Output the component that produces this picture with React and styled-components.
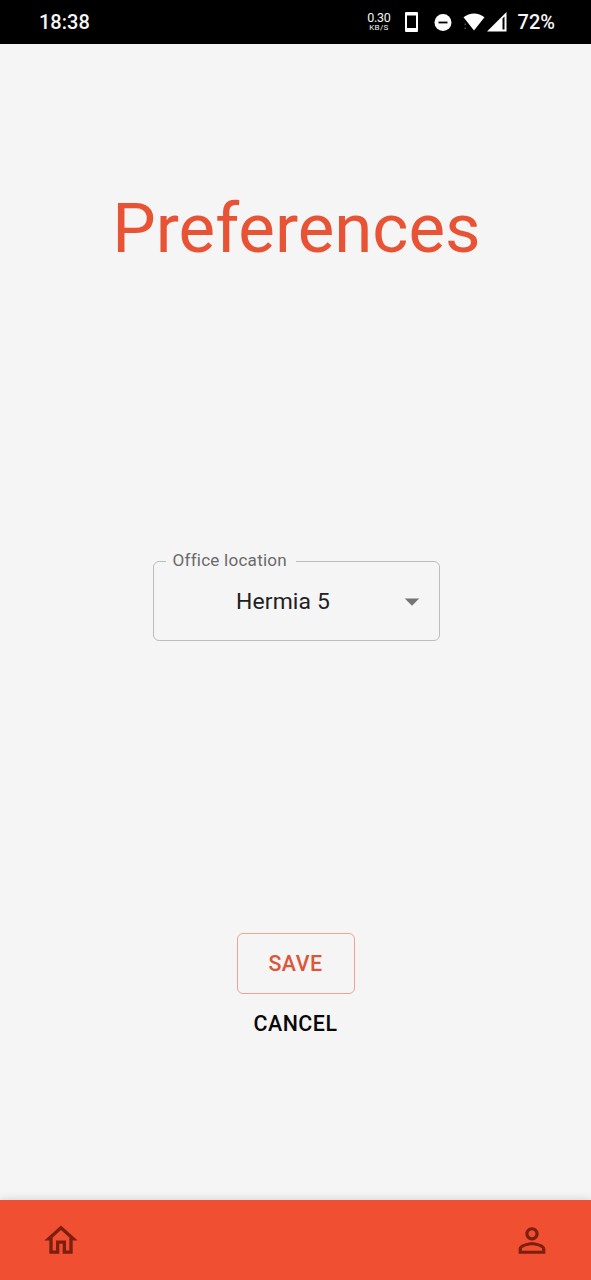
import React from 'react';
import styled, { createGlobalStyle } from 'styled-components';

const GlobalStyle = createGlobalStyle`
  *, *::before, *::after { box-sizing: border-box; }
  body { margin: 0; background: #f5f5f5; font-family: Roboto, sans-serif; }
  button { font: inherit; cursor: pointer; }
`;

const Screen = styled.div`
  display: flex;
  flex-direction: column;
  height: 1280px;
  width: 100%;
  overflow: hidden;
  background: #f5f5f5;
`;

const StatusBar = styled.header`
  display: flex;
  justify-content: space-between;
  align-items: center;
  flex: none;
  height: 44px;
  padding: 0 36px 0 39px;
  background: #000;
  color: #f5f5f5;
  font-size: 20px;
  font-weight: 500;
  line-height: 24px;
`;

const StatusIcons = styled.div`
  display: flex;
  align-items: center;
`;

const NetSpeed = styled.div`
  display: flex;
  flex-direction: column;
  align-items: center;
  width: 24px;
  margin-right: 14px;
  font-size: 12.5px;
  font-weight: 400;
  line-height: 12px;
  letter-spacing: -0.3px;
  white-space: nowrap;
`;

const SpeedUnit = styled.span`
  font-size: 8px;
  line-height: 8px;
  letter-spacing: 0.3px;
`;

const StatusGlyph = styled.svg`
  display: block;
  margin-right: ${({ $gap }) => $gap}px;
`;

const Main = styled.main`
  display: flex;
  flex-direction: column;
  align-items: center;
  flex: 1;
`;

const Title = styled.h1`
  margin: 145px 0 0 2px;
  color: #e85335;
  font-size: 69px;
  font-weight: 400;
  line-height: 80px;
`;

const Field = styled.fieldset`
  width: 287px;
  height: 91px;
  margin: 281px 0 0 1px;
  padding: 0 19px 0 12px;
  border: 1px solid #bcbcbc;
  border-radius: 6px;
  min-width: 0;
`;

const FieldLabel = styled.legend`
  padding: 0 9px 2px 7px;
  color: #6a6a6a;
  font-size: 17.1px;
  line-height: 20px;
  letter-spacing: 0.22px;
`;

const SelectButton = styled.button`
  display: flex;
  align-items: center;
  width: 100%;
  height: 59px;
  padding: 0;
  border: 0;
  background: none;
  color: #212121;
  font-size: 22.9px;
  letter-spacing: 0.16px;
`;

const SelectValue = styled.span`
  flex: 1;
  padding-right: 3px;
`;

const Actions = styled.div`
  display: flex;
  flex-direction: column;
  align-items: center;
  margin-top: 292px;
`;

const ActionButton = styled.button`
  width: 118px;
  height: ${({ $outlined }) => ($outlined ? 61 : 59)}px;
  padding: 0 0 1px;
  border: 1px solid ${({ $outlined }) => ($outlined ? '#f0a392' : 'transparent')};
  border-radius: 6px;
  background: none;
  color: ${({ $outlined }) => ($outlined ? '#dc5639' : '#080808')};
  font-size: 21.4px;
  font-weight: 500;
  letter-spacing: 0.5px;
`;

const BottomNav = styled.nav`
  display: flex;
  justify-content: space-between;
  align-items: center;
  flex: none;
  height: 80px;
  padding: 0 39.5px 0 40.5px;
  background: #f04f31;
  box-shadow: 0 0 9px rgba(0, 0, 0, 0.16);
`;

const NavButton = styled.button`
  display: flex;
  padding: 0;
  border: 0;
  background: none;
  color: #7c1f0e;
`;

const NavIcon = ({ d }) => (
  <svg width="40" height="40" viewBox="0 -0.3 24 24" fill="currentColor">
    <path d={d} />
  </svg>
);

const HOME = 'm12 5.69 5 4.5V18h-2v-6H9v6H7v-7.81l5-4.5M12 3 2 12h3v8h6v-6h2v6h6v-8h3L12 3z';
const PERSON =
  'M12 5.9c1.16 0 2.1.94 2.1 2.1s-.94 2.1-2.1 2.1S9.9 9.16 9.9 8s.94-2.1 2.1-2.1m0 9c2.97 0 6.1 1.46 6.1 2.1v1.1H5.9V17c0-.64 3.13-2.1 6.1-2.1M12 4C9.79 4 8 5.79 8 8s1.79 4 4 4 4-1.79 4-4-1.79-4-4-4zm0 9c-2.67 0-8 1.34-8 4v3h16v-3c0-2.66-5.33-4-8-4z';

export default function App() {
  return (
    <>
      <GlobalStyle />
      <Screen>
        <StatusBar>
          <span>18:38</span>
          <StatusIcons>
            <NetSpeed>
              <span>0.30</span>
              <SpeedUnit>KB/S</SpeedUnit>
            </NetSpeed>
            <StatusGlyph $gap={16} width="13" height="20" viewBox="0 0 13 20">
              <path fill="#fff" fillRule="evenodd" d="M1 0h11a1 1 0 0 1 1 1v18a1 1 0 0 1-1 1H1a1 1 0 0 1-1-1V1a1 1 0 0 1 1-1zM2 3.500v12.500h9V3.500z" />
            </StatusGlyph>
            <StatusGlyph $gap={11} width="18" height="18" viewBox="0 0 18 18">
              <circle cx="9" cy="9.500" r="8.500" fill="#fff" />
              <path d="M4.500 9.500h9" stroke="#000" strokeWidth="1.800" />
            </StatusGlyph>
            <StatusGlyph $gap={2} width="22" height="18" viewBox="0 0 22 18">
              <path fill="#fff" d="M0.500 4.300C6.500-.9 15.500-.9 21.500 4.300L11 17.500z" />
              <path fill="#555" d="M1.500 10.500h1.500v1.500h-1.500zM1.500 14.500h1.500v1.500h-1.500z" />
            </StatusGlyph>
            <StatusGlyph $gap={10.6} width="20" height="20" viewBox="0 0 20 20">
              <path fill="#fff" fillRule="evenodd" d="M0 19.500L19.500 0v19.500zM15.500 6.500v11h2v-13z" />
            </StatusGlyph>
            <span>72%</span>
          </StatusIcons>
        </StatusBar>
        <Main>
          <Title>Preferences</Title>
          <Field>
            <FieldLabel>Office location</FieldLabel>
            <SelectButton type="button">
              <SelectValue>Hermia 5</SelectValue>
              <svg width="16" height="8" viewBox="0 0 16 8">
                <path fill="#747474" d="M.8.500h14.400L8 7.700z" />
              </svg>
            </SelectButton>
          </Field>
          <Actions>
            <ActionButton type="button" $outlined>SAVE</ActionButton>
            <ActionButton type="button">CANCEL</ActionButton>
          </Actions>
        </Main>
        <BottomNav>
          <NavButton type="button" aria-label="Home"><NavIcon d={HOME} /></NavButton>
          <NavButton type="button" aria-label="Profile"><NavIcon d={PERSON} /></NavButton>
        </BottomNav>
      </Screen>
    </>
  );
}
